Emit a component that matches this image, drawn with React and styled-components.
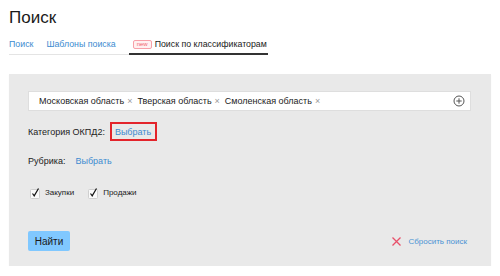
import React from "react";
import styled, { createGlobalStyle } from "styled-components";

const GlobalStyle = createGlobalStyle`
  body {
    margin: 0;
    background: #fff;
    font-family: "Liberation Sans", Arial, sans-serif;
    color: #222;
  }
`;

const Page = styled.div`
  padding: 0 9px;
`;

const Title = styled.h1`
  margin: 0;
  padding-top: 8px;
  font-size: 17px;
  font-weight: normal;
  line-height: 20px;
  color: #1a1a1a;
`;

const Tabs = styled.div`
  display: inline-flex;
  align-items: center;
  gap: 13px;
  margin-top: 7px;
  border-bottom: 1px solid #e4e4e4;
`;

const Tab = styled.div`
  display: flex;
  align-items: center;
  gap: 3px;
  height: 18px;
  font-size: 8.8px;
  color: ${(p) => (p.active ? "#1a1a1a" : "#3d8bd0")};
  padding: ${(p) => (p.active ? "0 1px 0 4px" : "0")};
  margin-bottom: -1px;
  border-bottom: 2px solid ${(p) => (p.active ? "#333" : "transparent")};
`;

const NewBadge = styled.span`
  font-size: 6px;
  line-height: 7px;
  padding: 0 3px;
  color: #f06470;
  background: #fff0f0;
  border: 1px solid #f7a0a8;
  border-radius: 2px;
`;

const Panel = styled.div`
  margin-top: 19px;
  background: #e9e9e9;
  padding: 17px 20px 15px 19px;
  box-shadow: 0 1px 1px rgba(0, 0, 0, 0.06);
  display: flex;
  flex-direction: column;
`;

const TagInput = styled.div`
  display: flex;
  align-items: center;
  height: 20px;
  background: #fff;
  border: 1px solid #dedede;
  box-sizing: border-box;
  padding: 0 5px 0 10px;
`;

const Tag = styled.span`
  font-size: 9px;
  color: #222;
  margin-right: 5px;
  display: inline-flex;
  align-items: center;
  gap: 3px;
`;

const TagClose = styled.span`
  color: #9a9a9a;
  font-size: 9px;
`;

const Spacer = styled.div`
  flex: 1;
`;

const Row = styled.div`
  display: flex;
  align-items: center;
  height: 19px;
  margin-top: ${(p) => p.mt}px;
  font-size: 9px;
`;

const Label = styled.span`
  color: #222;
  margin-right: ${(p) => p.gap}px;
`;

const Link = styled.a`
  color: #3d8bd0;
  text-decoration: none;
  font-size: 9px;
`;

const Highlight = styled.span`
  display: inline-flex;
  align-items: center;
  height: 19px;
  box-sizing: border-box;
  padding: 0 4px 0 3px;
  border: 2px solid #e3242b;
`;

const Check = styled.label`
  display: flex;
  align-items: center;
  gap: 4px;
  font-size: 8px;
  color: #222;
  margin-left: ${(p) => p.ml}px;
`;

const Footer = styled.div`
  display: flex;
  align-items: center;
  margin-top: 29px;
`;

const FindButton = styled.button`
  all: unset;
  width: 42px;
  height: 20px;
  text-align: center;
  background: #80c8ff;
  border-radius: 2px;
  font-size: 10px;
  color: #1a1a1a;
`;

const Reset = styled.a`
  display: flex;
  align-items: center;
  gap: 7px;
  font-size: 8px;
  color: #4a93d4;
  margin-right: 4px;
`;

const CheckIcon = () => (
  <svg width="12" height="12" viewBox="0 0 12 12">
    <rect x="1.5" y="2.5" width="9" height="9" rx="1" fill="#fafafa" stroke="#cfcfcf" />
    <path d="M3.5 6.5 L5.2 8.8 L9.5 1.5" fill="none" stroke="#111" strokeWidth="1.2" />
  </svg>
);

export default function App() {
  return (
    <>
      <GlobalStyle />
      <Page>
        <Title>Поиск</Title>
        <Tabs>
          <Tab>Поиск</Tab>
          <Tab>Шаблоны поиска</Tab>
          <Tab active>
            <NewBadge>new</NewBadge>
            Поиск по классификаторам
          </Tab>
        </Tabs>
        <Panel>
          <TagInput>
            <Tag>Московская область <TagClose>×</TagClose></Tag>
            <Tag>Тверская область <TagClose>×</TagClose></Tag>
            <Tag>Смоленская область <TagClose>×</TagClose></Tag>
            <Spacer />
            <svg width="12" height="12" viewBox="0 0 12 12">
              <circle cx="6" cy="6" r="5" fill="none" stroke="#555" strokeWidth="1" />
              <path d="M6 3.3 V8.7 M3.3 6 H8.7" stroke="#555" strokeWidth="1" />
            </svg>
          </TagInput>
          <Row mt={11}>
            <Label gap={5}>Категория ОКПД2:</Label>
            <Highlight>
              <Link>Выбрать</Link>
            </Highlight>
          </Row>
          <Row mt={10}>
            <Label gap={10}>Рубрика:</Label>
            <Link>Выбрать</Link>
          </Row>
          <Row mt={13}>
            <Check ml={1}>
              <CheckIcon />
              Закупки
            </Check>
            <Check ml={13}>
              <CheckIcon />
              Продажи
            </Check>
          </Row>
          <Footer>
            <FindButton>Найти</FindButton>
            <Spacer />
            <Reset>
              <svg width="9" height="9" viewBox="0 0 9 9">
                <path d="M0.5 0.5 L8.5 8.5 M8.5 0.5 L0.5 8.5" stroke="#e8506a" strokeWidth="1.3" />
              </svg>
              Сбросить поиск
            </Reset>
          </Footer>
        </Panel>
      </Page>
    </>
  );
}
